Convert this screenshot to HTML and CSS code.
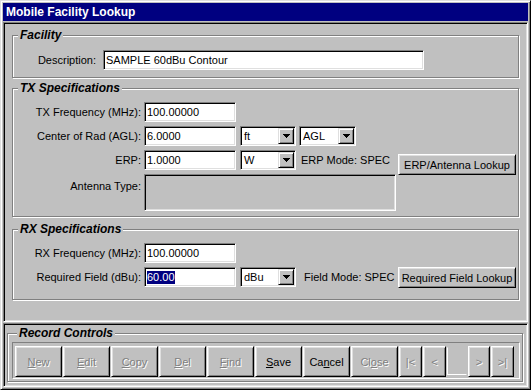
FILE: index.html
```html
<!doctype html>
<html lang="en">
<head>
    <meta charset="UTF-8">
    <title>Mobile Facility Lookup</title>
    <link rel="stylesheet" href="styles.css">
</head>
<body>

<div class="window">
    <div class="titlebar">Mobile Facility Lookup</div>

    <div class="client">
        <div class="panel panel-main">

            <fieldset class="group group-facility">
                <legend>Facility</legend>
                <div class="rows">
                    <div class="row">
                        <span class="lbl lbl-desc">Description:</span>
                        <div class="field field-desc">SAMPLE 60dBu Contour</div>
                    </div>
                </div>
            </fieldset>

            <fieldset class="group group-tx">
                <legend>TX Specifications</legend>
                <div class="rows">
                    <div class="row">
                        <span class="lbl">TX Frequency (MHz):</span>
                        <div class="field field-num">100.00000</div>
                    </div>
                    <div class="row">
                        <span class="lbl">Center of Rad (AGL):</span>
                        <div class="field field-num">6.0000</div>
                        <div class="select select-unit">
                            <span class="select-text">ft</span>
                            <span class="select-arrow"><svg width="7" height="4" viewBox="0 0 7 4"><path d="M0 0h7v1h-1v1h-1v1h-1v1h-1v-1h-1v-1h-1v-1h-1z"/></svg></span>
                        </div>
                        <div class="select select-ref">
                            <span class="select-text">AGL</span>
                            <span class="select-arrow"><svg width="7" height="4" viewBox="0 0 7 4"><path d="M0 0h7v1h-1v1h-1v1h-1v1h-1v-1h-1v-1h-1v-1h-1z"/></svg></span>
                        </div>
                    </div>
                    <div class="row">
                        <span class="lbl">ERP:</span>
                        <div class="field field-num">1.0000</div>
                        <div class="select select-unit">
                            <span class="select-text">W</span>
                            <span class="select-arrow"><svg width="7" height="4" viewBox="0 0 7 4"><path d="M0 0h7v1h-1v1h-1v1h-1v1h-1v-1h-1v-1h-1v-1h-1z"/></svg></span>
                        </div>
                        <span class="mode mode-erp">ERP Mode: SPEC</span>
                        <button class="btn btn-lookup">ERP/Antenna Lookup</button>
                    </div>
                    <div class="row">
                        <span class="lbl lbl-top">Antenna Type:</span>
                        <div class="field field-antenna"></div>
                    </div>
                </div>
            </fieldset>

            <fieldset class="group group-rx">
                <legend>RX Specifications</legend>
                <div class="rows">
                    <div class="row">
                        <span class="lbl">RX Frequency (MHz):</span>
                        <div class="field field-num">100.00000</div>
                    </div>
                    <div class="row">
                        <span class="lbl">Required Field (dBu):</span>
                        <div class="field field-num"><span class="sel">60.00</span></div>
                        <div class="select select-unit">
                            <span class="select-text">dBu</span>
                            <span class="select-arrow"><svg width="7" height="4" viewBox="0 0 7 4"><path d="M0 0h7v1h-1v1h-1v1h-1v1h-1v-1h-1v-1h-1v-1h-1z"/></svg></span>
                        </div>
                        <span class="mode mode-field">Field Mode: SPEC</span>
                        <button class="btn btn-lookup">Required Field Lookup</button>
                    </div>
                </div>
            </fieldset>

        </div>

        <div class="panel panel-record">
            <fieldset class="group group-record">
                <legend>Record Controls</legend>
                <div class="toolbar">
                    <button class="btn btn-rec off"><u>N</u>ew</button>
                    <button class="btn btn-rec off"><u>E</u>dit</button>
                    <button class="btn btn-rec off"><u>C</u>opy</button>
                    <button class="btn btn-rec off"><u>D</u>el</button>
                    <button class="btn btn-rec off"><u>F</u>ind</button>
                    <button class="btn btn-rec"><u>S</u>ave</button>
                    <button class="btn btn-rec">Ca<u>n</u>cel</button>
                    <button class="btn btn-rec off">Cl<u>o</u>se</button>
                    <button class="btn btn-nav off">|&lt;</button>
                    <button class="btn btn-nav off">&lt;</button>
                    <div class="nav-blank"></div>
                    <button class="btn btn-nav btn-next off">&gt;</button>
                    <button class="btn btn-nav off">&gt;|</button>
                </div>
            </fieldset>
        </div>
    </div>
</div>

</body>
</html>
```

FILE: styles.css
```css
* {
    box-sizing: border-box;
}

body {
    margin: 0;
    background: #c0c0c0;
    font: 11px "Liberation Sans", Arial, sans-serif;
    color: #000;
}

.window {
    width: 531px;
    height: 390px;
    border: 1px solid;
    border-color: #dfdfdf #000 #000 #dfdfdf;
    box-shadow: inset 1px 1px #fff, inset -1px -1px #808080;
    padding: 2px;
    display: flex;
    flex-direction: column;
}

.titlebar {
    height: 18px;
    background: #000080;
    color: #fff;
    font-weight: bold;
    font-size: 12px;
    line-height: 18px;
    padding-left: 3px;
}

.client {
    margin-top: 1px;
    flex: 1;
    display: flex;
    flex-direction: column;
    gap: 1px;
}

.panel {
    border: 1px solid;
    border-color: #808080 #fff #fff #808080;
    box-shadow: inset 1px 1px #000, inset -1px -1px #dfdfdf;
}

.panel-main {
    height: 300px;
    padding: 6px 8px 0 8px;
}

.panel-record {
    flex: 1;
    padding: 3px 4px 0 3px;
}

/* group boxes */
.group {
    margin: 0;
    padding: 0;
    min-width: 0;
    border: 1px solid #808080;
    box-shadow: inset 1px 1px #fff, 1px 1px #fff;
}

.group legend {
    margin-left: 5px;
    padding: 0 2px;
    font-size: 12px;
    font-weight: bold;
    font-style: italic;
    line-height: 13px;
    background: #c0c0c0;
}

.group-facility {
    padding: 8px 0 7px 0;
}

.group-tx {
    margin-top: 4px;
    padding: 7px 0 5px 0;
}

.group-rx {
    margin-top: 6px;
    padding: 7px 0 12px 0;
}

.group-record {
    padding: 2px 2px 2px 4px;
}

.rows {
    display: flex;
    flex-direction: column;
    gap: 4px;
}

.row {
    display: flex;
    align-items: flex-start;
    height: 20px;
}

.lbl {
    width: 128px;
    margin-right: 3px;
    text-align: right;
    line-height: 20px;
    white-space: nowrap;
}

.lbl-desc {
    width: 83px;
    margin-right: 7px;
}

.lbl-top {
    padding-top: 2px;
}

/* sunken edit fields */
.field {
    height: 20px;
    border: 1px solid;
    border-color: #808080 #fff #fff #808080;
    box-shadow: inset 1px 1px #000, inset -1px -1px #dfdfdf;
    background: #fff;
    padding: 0 2px;
    line-height: 18px;
    white-space: nowrap;
}

.field-desc {
    width: 321px;
}

.field-num {
    width: 92px;
}

.field-antenna {
    width: 252px;
    height: 37px;
    background: #c0c0c0;
}

.row:has(.field-antenna) {
    height: 37px;
}

.sel {
    display: inline-block;
    background: #000080;
    color: #fff;
    line-height: 13px;
    vertical-align: middle;
    margin-top: -2px;
}

/* combo boxes */
.select {
    display: flex;
    height: 20px;
    border: 1px solid;
    border-color: #808080 #fff #fff #808080;
    box-shadow: inset 1px 1px #000, inset -1px -1px #dfdfdf;
    background: #fff;
    padding: 1px;
}

.select-unit {
    width: 56px;
    margin-left: 4px;
}

.select-ref {
    width: 57px;
    margin-left: 3px;
}

.select-text {
    flex: 1;
    padding-left: 2px;
    line-height: 16px;
}

.select-arrow {
    width: 16px;
    height: 16px;
    background: #c0c0c0;
    border: 1px solid;
    border-color: #dfdfdf #000 #000 #dfdfdf;
    box-shadow: inset 1px 1px #fff, inset -1px -1px #808080;
    display: flex;
    align-items: center;
    justify-content: center;
}

.select-arrow svg {
    display: block;
    fill: #000;
}

.mode {
    line-height: 20px;
    white-space: nowrap;
}

.mode-erp {
    margin-left: 5px;
}

.mode-field {
    margin-left: 8px;
}

/* raised buttons */
.btn {
    font: inherit;
    color: #000;
    background: #c0c0c0;
    border: 1px solid;
    border-color: #fff #000 #000 #fff;
    box-shadow: inset 1px 1px #dfdfdf, inset -1px -1px #808080;
    padding: 0;
    display: flex;
    align-items: center;
    justify-content: center;
    white-space: nowrap;
}

.btn u {
    text-underline-offset: 1px;
}

.btn-lookup {
    width: 118px;
    height: 21px;
    margin-left: auto;
    margin-right: 2px;
    margin-top: 4px;
}

.group-rx .btn-lookup {
    margin-top: 0;
}

.off {
    color: #808080;
    text-shadow: 1px 1px 0 #fff;
}

/* record toolbar */
.toolbar {
    display: flex;
    gap: 1px;
    height: 37px;
    border: 1px solid;
    border-color: #808080 #fff #fff #808080;
    padding: 3px 2px 1px 2px;
}

.btn-rec {
    width: 47px;
    height: 31px;
}

.btn-nav {
    width: 23px;
    height: 31px;
}

.btn-next {
    width: 22px;
}

.nav-blank {
    width: 20px;
    height: 28px;
    margin-top: 1px;
    border: 1px solid;
    border-color: #c0c0c0 #c0c0c0 #fff #fff;
}
```
